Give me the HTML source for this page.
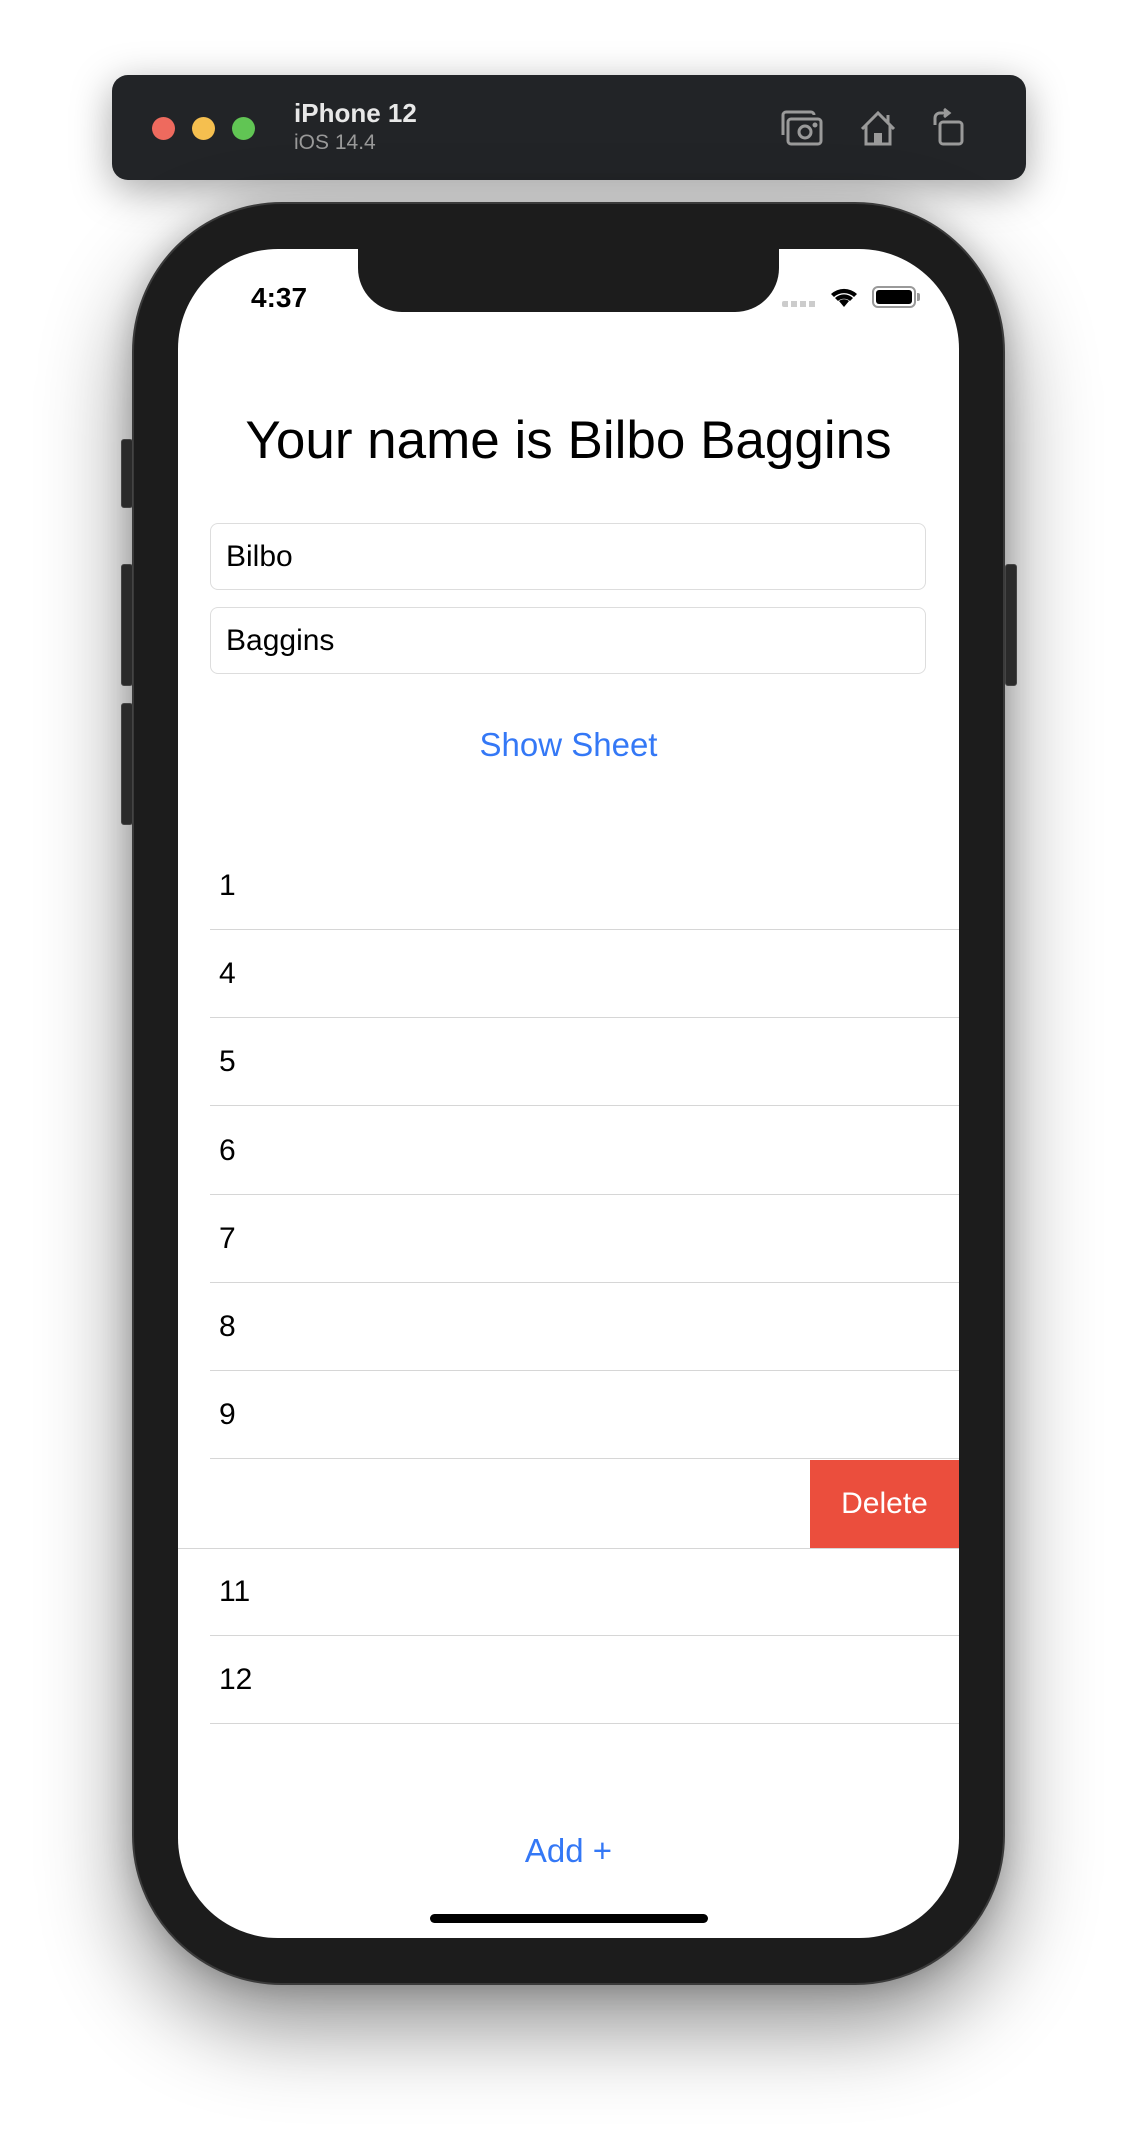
<!DOCTYPE html>
<html><head><meta charset="utf-8"><style>
*{margin:0;padding:0;box-sizing:border-box}
body{width:1136px;height:2132px;background:#fff;position:relative;overflow:hidden;font-family:"Liberation Sans",sans-serif}
.abs{position:absolute}
.bar{left:112px;top:75px;width:914px;height:105px;background:#222427;border-radius:16px;box-shadow:0 10px 40px rgba(0,0,0,.35)}
.dot{width:23px;height:23px;border-radius:50%;top:117px}
.phone{left:132px;top:202px;width:873px;height:1783px;background:#1c1c1c;border-radius:150px;box-shadow:0 40px 90px rgba(0,0,0,.45),0 0 30px rgba(0,0,0,.2);border:2px solid #3a3a3a}
.btn{background:#2a2a2a;border-radius:3px;width:12px;border:1px solid #444}
.screen{left:178px;top:249px;width:781px;height:1689px;background:#fff;border-radius:100px;overflow:hidden}
.notch{left:180px;top:0;width:421px;height:63px;background:#1c1c1c;border-radius:0 0 44px 44px}
.field{left:32px;width:716px;height:67px;border:1px solid #ddd;border-radius:8px;font-size:30px;padding-left:15px;line-height:65px;color:#000}
.row{left:32px;width:749px;height:88px;border-bottom:1px solid #d6d6d6;font-size:30px;line-height:88px;padding-left:9px}
.blue{color:#3478f6;font-size:33px;text-align:center;width:781px;left:0}
</style></head><body>
<div class="abs bar"></div>
<div class="abs dot" style="left:152px;background:#ee6a5e"></div>
<div class="abs dot" style="left:192px;background:#f5bf4f"></div>
<div class="abs dot" style="left:232px;background:#61c554"></div>
<div class="abs" style="left:294px;top:98px;color:#e8e8e8;font-weight:bold;font-size:26px">iPhone 12</div>
<div class="abs" style="left:294px;top:131px;color:#999;font-size:21px">iOS 14.4</div>
<svg class="abs" style="left:775px;top:105px" width="200" height="45" viewBox="0 0 200 45" fill="none" stroke="#9a9a9a" stroke-width="3">
<path d="M8 30 V10 a3 3 0 0 1 3-3 h25 a3 3 0 0 1 3 3"/>
<rect x="13" y="14" width="33" height="25" rx="3"/><circle cx="30" cy="27" r="6"/><circle cx="40" cy="20" r="1" fill="#9a9a9a"/>
<path d="M87 24 L103 8 L119 24 M91 20 V39 H115 V20"/><rect x="99" y="28" width="8" height="11" fill="#9a9a9a" stroke="none"/><path d="M113 10 V18"/>
<rect x="165" y="17" width="22" height="22" rx="3"/><path d="M160 20 V13 a5 5 0 0 1 5-5 h6"/><path d="M169 4 L174 8 L169 12" fill="#9a9a9a"/>
</svg>
<div class="abs phone"></div>
<div class="abs btn" style="left:121px;top:439px;height:69px"></div>
<div class="abs btn" style="left:121px;top:564px;height:122px"></div>
<div class="abs btn" style="left:121px;top:703px;height:122px"></div>
<div class="abs btn" style="left:1005px;top:564px;height:122px"></div>
<div class="abs screen">
 <div class="abs notch"></div>
 <div class="abs" style="left:73px;top:33px;font-size:28px;font-weight:bold">4:37</div>
 <div class="abs" style="left:604px;top:52px;width:35px;height:6px;background:repeating-linear-gradient(90deg,#ccc 0 6px,transparent 6px 9px);border-radius:2px"></div>
 <svg class="abs" style="left:650px;top:36px" width="32" height="24" viewBox="0 0 32 24"><path d="M16 22 L11 16 A8 8 0 0 1 21 16 Z M3 9 A19 19 0 0 1 29 9 L26 12 A15 15 0 0 0 6 12 Z M7 13 A13 13 0 0 1 25 13 L22 16 A9 9 0 0 0 10 16Z" fill="#000"/></svg>
 <div class="abs" style="left:694px;top:37px;width:44px;height:22px;border:2px solid #999;border-radius:6px;padding:2px"><div style="background:#000;width:100%;height:100%;border-radius:3px"></div></div>
 <div class="abs" style="left:739px;top:44px;width:3px;height:8px;background:#999;border-radius:0 2px 2px 0"></div>
 <div class="abs" style="left:0;width:781px;top:161px;text-align:center;font-size:53px">Your name is Bilbo Baggins</div>
 <div class="abs field" style="top:274px">Bilbo</div>
 <div class="abs field" style="top:358px">Baggins</div>
 <div class="abs blue" style="top:477px">Show Sheet</div>
 <div class="abs row" style="top:593px">1</div>
 <div class="abs row" style="top:681px">4</div>
 <div class="abs row" style="top:769px">5</div>
 <div class="abs row" style="top:858px">6</div>
 <div class="abs row" style="top:946px">7</div>
 <div class="abs row" style="top:1034px">8</div>
 <div class="abs row" style="top:1122px">9</div>
 <div class="abs" style="left:0;top:1211px;width:781px;height:89px;border-bottom:1px solid #d6d6d6"></div>
 <div class="abs" style="left:632px;top:1211px;width:149px;height:88px;background:#eb4e3d;color:#fff;font-size:30px;text-align:center;line-height:88px">Delete</div>
 <div class="abs row" style="top:1299px">11</div>
 <div class="abs row" style="top:1387px">12</div>
 <div class="abs blue" style="top:1583px">Add +</div>
 <div class="abs" style="left:252px;top:1665px;width:278px;height:9px;background:#000;border-radius:5px"></div>
</div>
</body></html>
